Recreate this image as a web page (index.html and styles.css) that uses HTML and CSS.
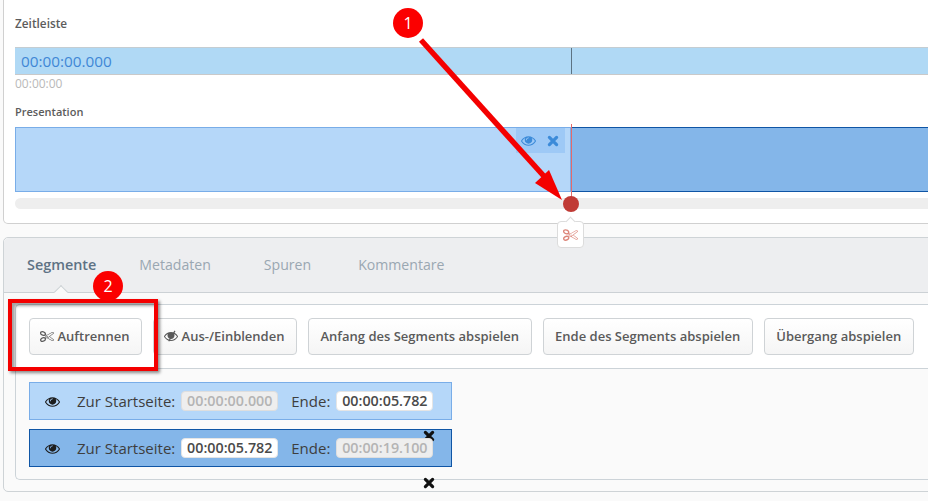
FILE: index.html
```html
<!DOCTYPE html>
<html lang="de">
<head>
<meta charset="utf-8">
<title>Zeitleiste</title>
<link rel="stylesheet" href="styles.css">
</head>
<body>
<svg class="defs" width="0" height="0" aria-hidden="true">
  <symbol id="eye" viewBox="0 0 1792 1792"><path d="M1664 960q-152-236-381-353 61 104 61 225 0 185-131.500 316.500t-316.500 131.500-316.500-131.500-131.500-316.500q0-121 61-225-229 117-381 353 133 205 333.500 326.500t434.500 121.500 434.500-121.500 333.500-326.500zm-720-384q0-20-14-34t-34-14q-125 0-214.500 89.500t-89.500 214.500q0 20 14 34t34 14 34-14 14-34q0-86 61-147t147-61q20 0 34-14t14-34zm848 384q0 34-20 69-140 230-376.500 368.500t-499.500 138.500-499.500-139-376.500-368q-20-35-20-69t20-69q140-229 376.500-368t499.500-139 499.500 139 376.500 368q20 35 20 69z"/></symbol>
  <symbol id="eye-off" viewBox="0 0 1792 1792"><path d="M1664 960q-152-236-381-353 61 104 61 225 0 185-131.500 316.500t-316.500 131.500-316.500-131.500-131.500-316.500q0-121 61-225-229 117-381 353 133 205 333.500 326.500t434.500 121.500 434.500-121.500 333.500-326.500zm128 0q0 34-20 69-140 230-376.500 368.500t-499.500 138.500-499.500-139-376.500-368q-20-35-20-69t20-69q140-229 376.500-368t499.500-139 499.500 139 376.500 368q20 35 20 69z"/><path d="M1340 200l130 75-800 1330-130-75z"/></symbol>
  <symbol id="cut" viewBox="0 0 1792 1792"><path d="M960 896q26 0 45 19t19 45-19 45-45 19-45-19-19-45 19-45 45-19zm300 64l507 398q28 20 25 56-5 35-35 51l-128 64q-13 7-29 7-17 0-31-8l-690-387-110 66q-8 4-12 5 14 49 10 97-7 77-56 147.500t-132 123.500q-132 84-277 84-136 0-222-78-90-84-79-207 7-76 56-147t131-124q132-84 278-84 83 0 151 31 9-13 22-22l122-73-122-73q-13-9-22-22-68 31-151 31-146 0-278-84-82-53-131-124t-56-147q-5-59 15.500-113t63.500-93q85-79 222-79 145 0 277 84 83 52 132 123t56 148q4 48-10 97 4 1 12 5l110 66 690-387q14-8 31-8 16 0 29 7l128 64q30 16 35 51 3 36-25 56zm-681-260q46-42 21-108t-106-117q-92-59-192-59-74 0-113 36-46 42-21 108t106 117q92 59 192 59 74 0 113-36zm-85 745q81-51 106-117t-21-108q-39-36-113-36-100 0-192 59-81 51-106 117t21 108q39 36 113 36 100 0 192-59zm178-613l96 58v-11q0-36 33-56l14-8-79-47-26 26q-3 3-10 11t-12 12q-2 2-4 3.500t-3 2.500zm224 224l96 32 736-576-128-64-768 431v113l-160 96 9 8q2 2 7 6 4 4 11 12t11 12l26 26zm704 416l128-64-520-408-177 138q-2 3-13 7z"/></symbol>
  <symbol id="close" viewBox="0 0 12 12"><path d="M2.4 2.4l7.200 7.200M9.600 2.400l-7.200 7.200" fill="none" stroke="currentColor" stroke-width="3.200" stroke-linecap="round"/></symbol>
</svg>

<section class="timeline-card">
  <h2 class="heading heading-main">Zeitleiste</h2>
  <div class="ruler">
    <span class="ruler-time">00:00:00.000</span>
    <i class="ruler-tick"></i>
  </div>
  <div class="ruler-start">00:00:00</div>
  <h2 class="heading heading-track">Presentation</h2>
  <div class="track">
    <div class="segment segment-first">
      <div class="segment-tools">
        <svg class="tool-eye"><use href="#eye"/></svg>
        <svg class="tool-close"><use href="#close"/></svg>
      </div>
    </div>
    <div class="segment segment-active"></div>
    <i class="playhead-line"></i>
  </div>
  <div class="scrubber">
    <i class="scrubber-dot"></i>
    <div class="scrubber-tip"><svg class="tip-cut"><use href="#cut"/></svg></div>
  </div>
</section>

<section class="editor-card">
  <nav class="tabs">
    <span class="tab tab-active">Segmente</span>
    <span class="tab tab-meta">Metadaten</span>
    <span class="tab tab-tracks">Spuren</span>
    <span class="tab">Kommentare</span>
  </nav>
  <div class="panel">
    <div class="toolbar">
      <button class="btn"><svg class="btn-icon"><use href="#cut"/></svg>Auftrennen</button>
      <button class="btn"><svg class="btn-icon"><use href="#eye-off"/></svg>Aus-/Einblenden</button>
      <button class="btn">Anfang des Segments abspielen</button>
      <button class="btn">Ende des Segments abspielen</button>
      <button class="btn">Übergang abspielen</button>
    </div>
    <div class="rows">
      <div class="row row-light">
        <svg class="row-eye"><use href="#eye"/></svg>
        <span class="row-label">Zur Startseite:</span>
        <span class="time time-off">00:00:00.000</span>
        <span class="row-label row-end">Ende:</span>
        <span class="time">00:00:05.782</span>
        <svg class="row-close"><use href="#close"/></svg>
      </div>
      <div class="row row-dark">
        <svg class="row-eye"><use href="#eye"/></svg>
        <span class="row-label">Zur Startseite:</span>
        <span class="time">00:00:05.782</span>
        <span class="row-label row-end">Ende:</span>
        <span class="time time-off">00:00:19.100</span>
        <svg class="row-close"><use href="#close"/></svg>
      </div>
    </div>
  </div>
</section>

<div class="callout-box"></div>
<svg class="callout-arrow" width="928" height="501" viewBox="0 0 928 501">
  <path class="arrow-shaft" d="M421 40L551 184"/>
  <path class="arrow-head" d="M549 170L535 183L562 200Z"/>
</svg>
<span class="badge badge-one">1</span>
<span class="badge badge-two">2</span>
</body>
</html>
```

FILE: styles.css
```css
html, body { margin: 0; height: 501px; overflow: hidden; }
body {
  position: relative;
  background: #fafafa;
  font-family: "Open Sans", "Noto Sans", sans-serif;
  color: #5a5a5a;
}
.defs { position: absolute; }

.timeline-card {
  box-sizing: border-box;
  height: 224px;
  margin: 0 -10px 0 3px;
  padding: 17px 0 0 11px;
  background: #fff;
  border: 1px solid #d0d0d0;
  border-top: 0;
  border-radius: 0 0 5px 5px;
}
.heading { margin: 0; font-size: 11px; font-weight: 600; line-height: 13px; color: #5c5c5c; }
.heading-main { font-size: 11.800px; }
.ruler {
  position: relative;
  box-sizing: border-box;
  height: 28px;
  margin-top: 17px;
  padding-left: 6px;
  background: #b0d9f5;
  border-top: 1px solid #c4cdd2;
  border-bottom: 1px solid #c9c9c9;
  color: #3f87d6;
  font-size: 15.300px;
  line-height: 26px;
}
.ruler-tick { position: absolute; left: 556px; top: 0; width: 1px; height: 26px; background: #5c7383; }
.ruler-start { margin-top: 2px; font-size: 12px; line-height: 14px; color: #b9b9b9; }
.heading-track { margin-top: 14px; }
.track { position: relative; display: flex; height: 65px; margin-top: 9px; }
.segment { box-sizing: border-box; height: 65px; border: 1px solid; }
.segment-first {
  position: relative;
  width: 556px;
  flex: none;
  background: #b5d7f9;
  border-color: #79ade8;
}
.segment-active { flex: 1; background: #84b6e9; border-color: #0f55a5; border-right: 0; }
.segment-tools {
  position: absolute;
  top: 0;
  right: 5px;
  display: flex;
  align-items: center;
  box-sizing: border-box;
  width: 49px;
  height: 25px;
  padding-left: 5px;
  background: #9ec9f6;
  color: #3c8bd9;
}
.tool-eye { width: 15px; height: 15px; fill: currentColor; }
.tool-close { width: 12px; height: 12px; margin-left: 11px; color: #3c8bd9; }
.playhead-line { position: absolute; left: 556px; top: -3px; width: 1px; height: 73px; background: #e46a6a; }

.scrubber { position: relative; height: 11px; margin-top: 6px; background: #eeeeee; border-radius: 6px 0 0 6px; }
.scrubber-dot {
  position: absolute;
  left: 548px;
  top: -2px;
  width: 16px;
  height: 16px;
  border-radius: 50%;
  background: #c03a35;
}
.scrubber-tip {
  position: absolute;
  z-index: 2;
  left: 542px;
  top: 23px;
  display: flex;
  align-items: center;
  justify-content: center;
  box-sizing: border-box;
  width: 27px;
  height: 27px;
  background: #fff;
  border: 1px solid #dcdcdc;
  border-radius: 4px;
}
.scrubber-tip::before {
  content: "";
  position: absolute;
  top: -4px;
  left: 9px;
  width: 6px;
  height: 6px;
  background: #fff;
  border-left: 1px solid #dcdcdc;
  border-top: 1px solid #dcdcdc;
  transform: rotate(45deg);
}
.tip-cut { width: 15px; height: 15px; fill: #dc8478; }

.editor-card {
  box-sizing: border-box;
  height: 255px;
  margin: 13px -10px 0 3px;
  padding-bottom: 11px;
  background: #fafafa;
  border: 1px solid #ced3d6;
  border-radius: 5px 5px 5px 5px;
  display: flex;
  flex-direction: column;
}
.tabs {
  position: relative;
  display: flex;
  align-items: center;
  flex: none;
  box-sizing: border-box;
  height: 55px;
  padding: 0 0 1px 23px;
  background: #edeef0;
  border-bottom: 1px solid #ccd1d5;
  border-radius: 5px 5px 0 0;
  font-size: 14.100px;
  color: #9aa7b2;
}
.tab { margin-right: 47px; }
.tab-meta { margin-right: 53px; }
.tab-tracks { margin-right: 47px; }
.tab-active { font-size: 14.400px; font-weight: 600; color: #5e7284; margin-right: 43px; }
.tab-active::after {
  content: "";
  position: absolute;
  left: 52px;
  bottom: -5px;
  width: 9px;
  height: 9px;
  background: #fafafa;
  border-left: 1px solid #ccd1d5;
  border-top: 1px solid #ccd1d5;
  transform: rotate(45deg);
}
.panel {
  flex: 1;
  margin: 11px 0 0 11px;
  border: 1px solid #ccd3d8;
  border-right: 0;
  border-radius: 5px 0 0 5px;
  background: #fafafa;
}
.toolbar {
  display: flex;
  gap: 11px;
  align-items: center;
  box-sizing: border-box;
  height: 64px;
  padding: 0 0 1px 13px;
  background: #fff;
  border-bottom: 1px solid #ccd3d8;
  border-radius: 5px 0 0 0;
}
.btn {
  display: flex;
  align-items: center;
  height: 37px;
  padding: 0 11.500px;
  font: 600 13px "Open Sans", sans-serif;
  color: #5a5a5a;
  background: linear-gradient(#fff, #f5f5f5);
  border: 1px solid #cfd3d6;
  border-radius: 4px;
  white-space: nowrap;
}
.btn-icon { width: 14px; height: 14px; margin: 0 4px 0 -2px; fill: #5a5a5a; }

.rows { display: flex; flex-direction: column; gap: 9px; padding: 13px 0 0 13px; }
.row {
  position: relative;
  display: flex;
  align-items: center;
  box-sizing: border-box;
  width: 423px;
  height: 38px;
  padding-left: 15px;
  border: 1px solid;
  font-size: 15px;
  color: #3e3e3e;
}
.row-light { background: #b5d7f9; border-color: #79ade8; }
.row-dark { background: #84b6e9; border-color: #0f55a5; }
.row-eye { width: 15px; height: 15px; margin-right: 17px; fill: #1d1d1d; }
.row-label { margin-right: 6px; }
.row-end { margin-left: 13px; }
.time {
  position: relative;
  z-index: 2;
  box-sizing: border-box;
  width: 97px;
  height: 20px;
  background: #fff;
  border: 1px solid #e5e5e5;
  border-radius: 4px;
  font-size: 14.300px;
  font-weight: 600;
  line-height: 18px;
  text-align: center;
  color: #4a4a4a;
}
.time-off { background: #eeeeee; color: #b4b4b4; border-color: #dedede; }
.row-close { position: absolute; z-index: 1; left: 393px; top: 47px; width: 12px; height: 12px; color: #111; }

.callout-box {
  position: absolute;
  left: 8px;
  top: 299px;
  box-sizing: border-box;
  width: 150px;
  height: 72px;
  border: 4px solid #f40000;
  box-shadow: 2px 2px 3px rgba(0, 0, 0, .45), inset 3px 3px 3px rgba(0, 0, 0, .35);
}
.callout-arrow { position: absolute; left: 0; top: 0; pointer-events: none; }
.arrow-shaft { fill: none; stroke: #f40000; stroke-width: 5.500px; }
.arrow-head { fill: #f40000; }
.badge {
  position: absolute;
  display: flex;
  align-items: center;
  justify-content: center;
  width: 30px;
  height: 30px;
  border-radius: 50%;
  background: #fb0000;
  color: #fff;
  font: 16px "Open Sans", sans-serif;
}
.badge-one { left: 393px; top: 8px; }
.badge-two { left: 93px; top: 271px; }
```
